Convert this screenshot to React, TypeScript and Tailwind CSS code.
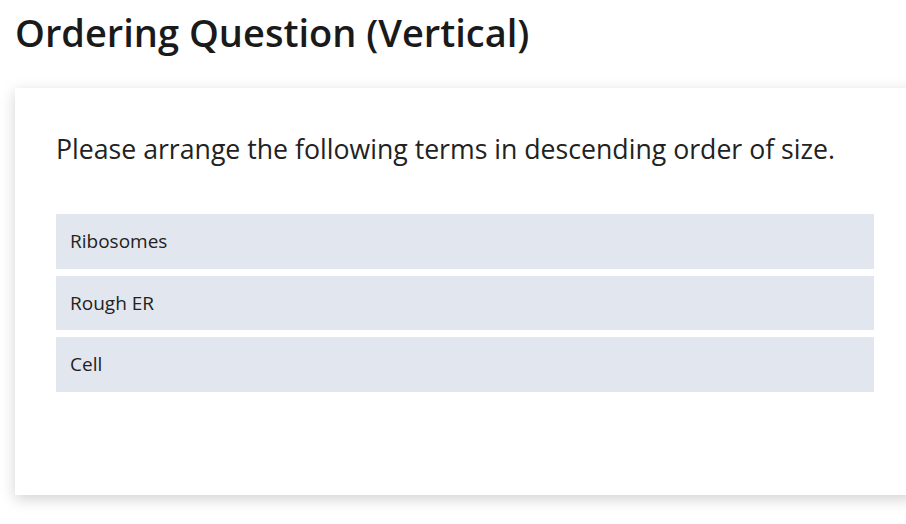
export default function App() {
  const items = ["Ribosomes", "Rough ER", "Cell"];
  return (
    <div className="min-h-screen bg-white pl-[15px] text-[#1a1a1a]" style={{ fontFamily: '"Open Sans", sans-serif' }}>
      <h1 className="pt-[5px] text-[38px] font-semibold leading-[54px]">Ordering Question (Vertical)</h1>
      <div className="mt-[29px] w-[900px] bg-white px-[41px] pt-[43px] pb-[103px] shadow-[0_4px_14px_rgba(0,0,0,0.18)]">
        <p className="text-[26.67px] leading-[36px] text-[#222]">Please arrange the following terms in descending order of size.</p>
        <div className="mt-[47px] flex w-[818px] flex-col gap-[7px]">
          {items.map((item) => (
            <div key={item} className="flex h-[54.5px] items-center bg-[#e2e7ef] px-[14px] text-[19px] text-[#222]">
              {item}
            </div>
          ))}
        </div>
      </div>
    </div>
  );
}
